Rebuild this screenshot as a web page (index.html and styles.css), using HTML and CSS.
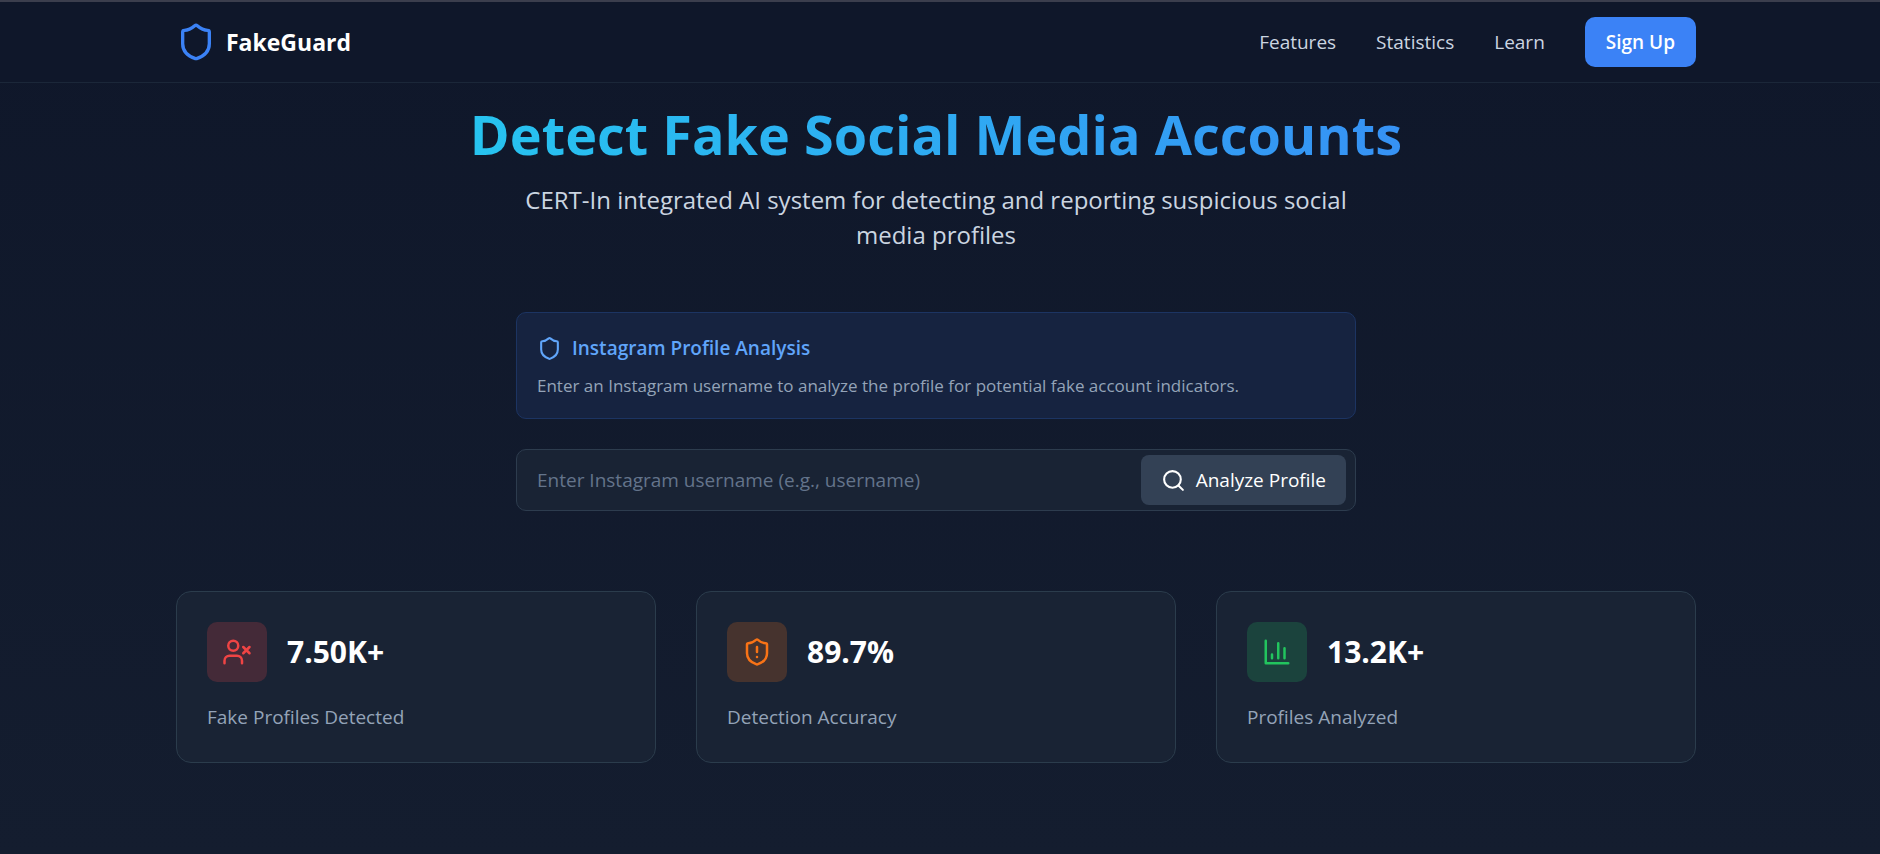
FILE: index.html
```html
<!DOCTYPE html>
<html lang="en">
<head>
<meta charset="utf-8">
<meta name="viewport" content="width=device-width, initial-scale=1">
<title>FakeGuard</title>
<link rel="stylesheet" href="styles.css">
</head>
<body>
<header class="site-header">
  <div class="container nav">
    <a class="brand" href="#">
      <svg class="icon icon-xl" viewBox="0 0 24 24" aria-hidden="true"><path d="M20 13c0 5-3.500 7.500-7.660 8.950a1 1 0 0 1-.670-.010C7.500 20.500 4 18 4 13V6a1 1 0 0 1 1-1c2 0 4.500-1.200 6.240-2.720a1.170 1.170 0 0 1 1.520 0C14.510 3.810 17 5 19 5a1 1 0 0 1 1 1z"/></svg>
      <span>FakeGuard</span>
    </a>
    <nav class="nav-links" aria-label="Main">
      <a href="#features">Features</a>
      <a href="#statistics">Statistics</a>
      <a href="#learn">Learn</a>
      <button class="btn-signup" type="button">Sign Up</button>
    </nav>
  </div>
</header>
<main class="container">
  <section class="hero">
    <h1 class="hero-title">Detect Fake Social Media Accounts</h1>
    <p class="hero-text">CERT-In integrated AI system for detecting and reporting suspicious social media profiles</p>
  </section>
  <section class="analyze">
    <div class="info">
      <h2 class="info-title">
        <svg class="icon icon-md" viewBox="0 0 24 24" aria-hidden="true"><path d="M20 13c0 5-3.500 7.500-7.660 8.950a1 1 0 0 1-.670-.010C7.500 20.500 4 18 4 13V6a1 1 0 0 1 1-1c2 0 4.500-1.200 6.240-2.720a1.170 1.170 0 0 1 1.520 0C14.510 3.810 17 5 19 5a1 1 0 0 1 1 1z"/></svg>
        <span>Instagram Profile Analysis</span>
      </h2>
      <p class="info-text">Enter an Instagram username to analyze the profile for potential fake account indicators.</p>
    </div>
    <form class="search">
      <input class="search-input" type="text" aria-label="Instagram username" placeholder="Enter Instagram username (e.g., username)">
      <button class="search-btn" type="button">
        <svg class="icon icon-md" viewBox="0 0 24 24" aria-hidden="true"><circle cx="11" cy="11" r="8"/><path d="m21 21-4.300-4.300"/></svg>
        <span>Analyze Profile</span>
      </button>
    </form>
  </section>
  <section class="stats" id="statistics">
    <article class="card">
      <div class="card-head">
        <div class="badge badge-red"><svg class="icon icon-lg" viewBox="0 0 24 24" aria-hidden="true"><path d="M16 21v-2a4 4 0 0 0-4-4H6a4 4 0 0 0-4 4v2"/><circle cx="9" cy="7" r="4"/><path d="m17 8 5 5M22 8l-5 5"/></svg></div>
        <strong class="card-value">7.50K+</strong>
      </div>
      <p class="card-label">Fake Profiles Detected</p>
    </article>
    <article class="card">
      <div class="card-head">
        <div class="badge badge-orange"><svg class="icon icon-lg" viewBox="0 0 24 24" aria-hidden="true"><path d="M20 13c0 5-3.500 7.500-7.660 8.950a1 1 0 0 1-.670-.010C7.500 20.500 4 18 4 13V6a1 1 0 0 1 1-1c2 0 4.500-1.200 6.240-2.720a1.170 1.170 0 0 1 1.520 0C14.510 3.810 17 5 19 5a1 1 0 0 1 1 1zM12 8v4M12 16h.010"/></svg></div>
        <strong class="card-value">89.7%</strong>
      </div>
      <p class="card-label">Detection Accuracy</p>
    </article>
    <article class="card">
      <div class="card-head">
        <div class="badge badge-green"><svg class="icon icon-lg" viewBox="0 0 24 24" aria-hidden="true"><path d="M3 3v18h18M8 17v-3M13 17V5M18 17V9"/></svg></div>
        <strong class="card-value">13.2K+</strong>
      </div>
      <p class="card-label">Profiles Analyzed</p>
    </article>
  </section>
</main>
</body>
</html>
```
FILE: styles.css
```css
*, *::before, *::after { box-sizing: border-box; }
html { background: #141d2f; }
body {
  margin: 0;
  min-height: 100vh;
  border-top: 2px solid #3b3e4d;
  background: linear-gradient(#0f172a, #141d2f);
  color: #fff;
  font-family: "Segoe UI", "Open Sans", "Noto Sans", sans-serif;
  font-size: 19px;
  line-height: 30px;
}
h1, h2, p { margin: 0; }
button, input { font: inherit; }
a { color: inherit; text-decoration: none; }
.container {
  width: 100%;
  max-width: 1528px;
  margin: 0 auto;
  padding-right: 8px;
}
.icon {
  display: block;
  flex: none;
  fill: none;
  stroke: currentColor;
  stroke-width: 2;
  stroke-linecap: round;
  stroke-linejoin: round;
}
.icon-md { width: 25px; height: 25px; }
.icon-lg { width: 30px; height: 30px; }
.icon-xl { width: 40px; height: 40px; color: #3b82f6; }

.site-header { background: #0f172a; border-bottom: 1px solid #1b2739; }
.nav { display: flex; align-items: center; justify-content: space-between; height: 80px; }
.brand { display: flex; align-items: center; gap: 10px; font-size: 23px; line-height: 32px; font-weight: 700; }
.nav-links { display: flex; align-items: center; gap: 40px; color: #cbd5e1; }
.btn-signup {
  height: 50px;
  padding: 0 21px;
  border: 0;
  border-radius: 10px;
  background: #3b82f6;
  color: #fff;
  font-weight: 600;
}

.hero { padding-top: 21px; text-align: center; }
.hero-title {
  font-size: 54px;
  line-height: 60px;
  font-weight: 700;
  background: linear-gradient(to right, #22d3ee, #3b82f6);
  -webkit-background-clip: text;
  background-clip: text;
  color: transparent;
}
.hero-text { max-width: 840px; margin: 18px auto 0; font-size: 24px; line-height: 35px; color: #cbd5e1; }

.analyze { max-width: 840px; margin: 60px auto 0; }
.info { padding: 20px; border: 1px solid #1c3462; border-radius: 10px; background: #162340; }
.info-title { display: flex; align-items: center; gap: 10px; font-size: 19px; font-weight: 600; color: #60a5fa; }
.info-text { margin-top: 10px; font-size: 17px; line-height: 25px; color: #94a3b8; }
.search {
  display: flex;
  align-items: center;
  margin-top: 30px;
  padding: 5px 9px 5px 20px;
  border: 1px solid #2d3c4e;
  border-radius: 10px;
  background: #192334;
}
.search-input { flex: 1; min-width: 0; height: 50px; padding: 0; border: 0; outline: 0; background: none; color: #fff; }
.search-input::placeholder { color: #64748b; opacity: 1; }
.search-btn {
  display: flex;
  align-items: center;
  gap: 10px;
  height: 50px;
  padding: 0 20px;
  border: 0;
  border-radius: 8px;
  background: #334155;
  color: #fff;
}

.stats { display: grid; grid-template-columns: repeat(3, 1fr); gap: 40px; margin-top: 80px; }
.card { padding: 30px; border: 1px solid #2b3c4c; border-radius: 15px; background: #192334; }
.card-head { display: flex; align-items: center; gap: 20px; }
.badge { display: grid; place-items: center; width: 60px; height: 60px; border-radius: 10px; }
.badge-red { background: #442a38; color: #ef4444; }
.badge-orange { background: #46332e; color: #f97316; }
.badge-green { background: #1b433d; color: #22c55e; }
.card-value { font-size: 30px; font-weight: 700; line-height: 40px; }
.card-label { margin-top: 20px; color: #94a3b8; }
```
